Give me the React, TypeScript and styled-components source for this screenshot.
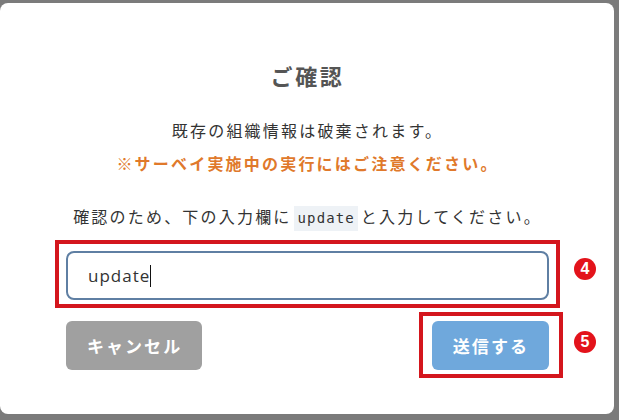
import React from "react";
import styled, { createGlobalStyle } from "styled-components";

const GlobalStyle = createGlobalStyle`
  html, body {
    margin: 0;
    padding: 0;
    background: #7b7b7b;
  }
  body {
    width: 619px;
    height: 420px;
    overflow: hidden;
    font-family: "Noto Sans CJK JP", "Noto Sans", sans-serif;
  }
`;

const Modal = styled.div`
  box-sizing: border-box;
  margin-top: 3px;
  width: 614px;
  height: 411px;
  background: #ffffff;
  border-radius: 8px;
  padding: 57px 65px 0 66px;
  display: flex;
  flex-direction: column;
  align-items: stretch;
`;

const Title = styled.h2`
  margin: 0;
  text-align: center;
  font-size: 22px;
  line-height: 30px;
  font-weight: 700;
  color: #555555;
  letter-spacing: 0.12em;
`;

const Message = styled.p<{ $warn?: boolean; $gap: number }>`
  margin: ${(p) => p.$gap}px 0 0;
  text-align: center;
  font-size: 16px;
  line-height: 24px;
  height: 24px;
  letter-spacing: 2.2px;
  font-weight: ${(p) => (p.$warn ? 700 : 400)};
  color: ${(p) => (p.$warn ? "#e0792b" : "#333333")};
  white-space: nowrap;
`;

const Code = styled.code`
  font-family: "DejaVu Sans Mono", "Liberation Mono", monospace;
  font-size: 14px;
  line-height: 1;
  letter-spacing: 0.08em;
  background: #eef2f6;
  color: #333333;
  padding: 4px 3px 5px 4px;
  margin: 0 3px 0 2px;
`;

const Annotated = styled.div<{ $gap: number }>`
  position: relative;
  margin-top: ${(p) => p.$gap}px;
`;

const Outline = styled.div<{ $t: number; $r: number; $b: number; $l: number }>`
  position: absolute;
  top: ${(p) => -p.$t}px;
  right: ${(p) => -p.$r}px;
  bottom: ${(p) => -p.$b}px;
  left: ${(p) => -p.$l}px;
  border: 4px solid #d4161d;
  pointer-events: none;
`;

const Badge = styled.span<{ $right: number; $top: number }>`
  position: absolute;
  right: ${(p) => p.$right}px;
  top: ${(p) => p.$top}px;
  width: 22px;
  height: 22px;
  border-radius: 50%;
  background: #e3131b;
  color: #ffffff;
  font-family: "Liberation Sans", Arial, sans-serif;
  font-weight: 700;
  font-size: 16px;
  line-height: 22px;
  text-align: center;
`;

const Field = styled.div`
  box-sizing: border-box;
  height: 49px;
  border: 2px solid #5f7fa3;
  border-radius: 8px;
  padding: 0 20px;
  display: flex;
  align-items: center;
  font-family: "Open Sans", "Noto Sans", sans-serif;
  font-size: 17px;
  letter-spacing: 1px;
  color: #333333;
`;

const Caret = styled.span`
  display: inline-block;
  width: 1px;
  height: 22px;
  background: #111111;
  margin-left: 0;
`;

const Actions = styled.div`
  margin-top: 21px;
  display: flex;
  justify-content: space-between;
  align-items: flex-start;
`;

const Button = styled.button<{ $primary?: boolean }>`
  box-sizing: border-box;
  height: 49px;
  padding: 0 20px 0 21px;
  border: none;
  border-radius: 6px;
  background: ${(p) => (p.$primary ? "#6fa8dc" : "#a0a0a0")};
  color: #ffffff;
  font-family: "Noto Sans CJK JP", sans-serif;
  font-size: 17px;
  font-weight: 700;
  letter-spacing: 0.12em;
  cursor: pointer;
`;

export default function App() {
  return (
    <>
      <GlobalStyle />
      <Modal>
        <Title>ご確認</Title>
        <Message $gap={28}>既存の組織情報は破棄されます。</Message>
        <Message $gap={9} $warn>
          ※サーベイ実施中の実行にはご注意ください。
        </Message>
        <Message $gap={29}>
          確認のため、下の入力欄に<Code>update</Code>と入力してください。
        </Message>
        <Annotated $gap={23}>
          <Field>
            update
            <Caret />
          </Field>
          <Outline $t={11} $r={11} $b={8} $l={11} />
          <Badge $right={-47} $top={7}>4</Badge>
        </Annotated>
        <Actions>
          <Button>キャンセル</Button>
          <Annotated $gap={0}>
            <Button $primary>送信する</Button>
            <Outline $t={9} $r={14} $b={8} $l={13} />
            <Badge $right={-47} $top={10}>5</Badge>
          </Annotated>
        </Actions>
      </Modal>
    </>
  );
}
